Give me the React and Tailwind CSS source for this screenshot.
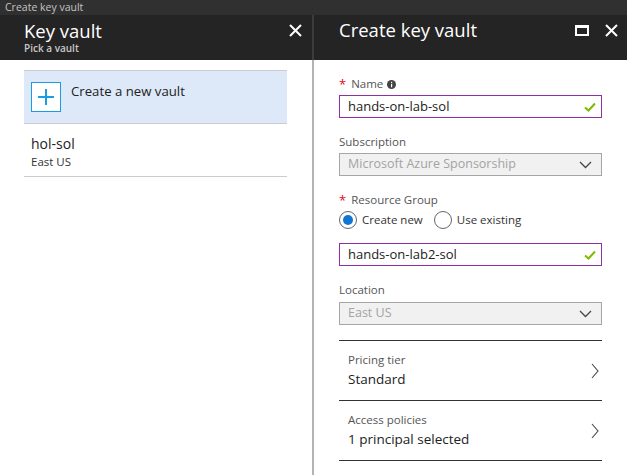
import React from "react";

const font = { fontFamily: '"Open Sans", "Noto Sans", sans-serif' };

function CloseIcon({ className }) {
  return (
    <svg className={className} width="13" height="13" viewBox="0 0 13 13">
      <path d="M1 1 L12 12 M12 1 L1 12" stroke="#fff" strokeWidth="2" fill="none" />
    </svg>
  );
}

function Check() {
  return (
    <svg width="12" height="10" viewBox="0 0 12 10">
      <path d="M1 5.5 L4.5 8.5 L11 1.5" stroke="#7fba00" strokeWidth="2" fill="none" />
    </svg>
  );
}

function Chevron() {
  return (
    <svg width="13" height="8" viewBox="0 0 13 8">
      <path d="M1 1 L6.5 6.5 L12 1" stroke="#444" strokeWidth="1.3" fill="none" />
    </svg>
  );
}

function ChevronRight() {
  return (
    <svg width="8" height="16" viewBox="0 0 8 16">
      <path d="M1 1 L7 8 L1 15" stroke="#444" strokeWidth="1.1" fill="none" />
    </svg>
  );
}

function Input({ value }) {
  return (
    <div className="h-[23px] border border-[#8f2fa8] flex items-center justify-between pl-[8px] pr-[5px] text-[13px] text-[#222]">
      <span>{value}</span>
      <Check />
    </div>
  );
}

function Select({ value }) {
  return (
    <div className="h-[23px] border border-[#a6a6a6] bg-[#f1f1f1] flex items-center justify-between pl-[8px] pr-[9px] text-[12.5px] text-[#a3a3a3]">
      <span>{value}</span>
      <Chevron />
    </div>
  );
}

function Label({ children, required }) {
  return (
    <div className="text-[11.5px] text-[#555] leading-[14px] flex items-center">
      {required && <span className="text-[#e00b1c] mr-[5px] text-[13px]">*</span>}
      {children}
    </div>
  );
}

function Radio({ checked, label }) {
  return (
    <div className="flex items-center gap-[5px]">
      <div className="w-[18px] h-[18px] rounded-full border border-[#666] flex items-center justify-center bg-white">
        {checked && <div className="w-[10px] h-[10px] rounded-full bg-[#0f76d6]" />}
      </div>
      <span className="text-[11.5px] text-[#333]">{label}</span>
    </div>
  );
}

function NavRow({ title, value }) {
  return (
    <div className="h-[60px] border-b border-[#333] flex items-center justify-between pl-[9px] pr-[3px]">
      <div className="flex flex-col">
        <span className="text-[11.5px] text-[#555] leading-[16px]">{title}</span>
        <span className="text-[13.5px] text-[#222] leading-[22px]">{value}</span>
      </div>
      <ChevronRight />
    </div>
  );
}

export default function App() {
  return (
    <div className="w-[627px] h-[475px] bg-white overflow-hidden flex flex-col" style={font}>
      <div className="h-[15px] bg-[#303030] text-[10.5px] leading-[15px] text-[#c4c4c4] pl-[5px]">
        Create key vault
      </div>
      <div className="flex-1 flex">
        {/* Left panel */}
        <div className="w-[312px] flex flex-col">
          <div className="h-[45px] bg-[#242424] flex justify-between pl-[24px] pr-[10px]">
            <div className="flex flex-col pt-[6px]">
              <span className="text-[18.5px] leading-[19px] text-white">Key vault</span>
              <span className="text-[10px] leading-[12px] font-semibold text-[#c9c9c9] mt-[2px]">Pick a vault</span>
            </div>
            <div className="pt-[9px]">
              <CloseIcon />
            </div>
          </div>
          <div className="pt-[10px] px-[24px] pr-[25px]">
            <div className="border-t border-b border-[#ccc] bg-[#dde9f8] h-[54px] flex items-start pt-[11px] pl-[7px]">
              <div className="w-[30px] h-[30px] border border-[#1a9de0] bg-white flex items-center justify-center">
                <svg width="16" height="16" viewBox="0 0 16 16">
                  <path d="M8 0 V16 M0 8 H16" stroke="#1a9de0" strokeWidth="2" />
                </svg>
              </div>
              <span className="ml-[10px] text-[13.2px] text-[#222] leading-[18px]">Create a new vault</span>
            </div>
            <div className="border-b border-[#ccc] h-[53px] pl-[7px] pt-[11px] flex flex-col">
              <span className="text-[14px] text-[#222] leading-[18px]">hol-sol</span>
              <span className="text-[11.5px] text-[#333] leading-[18px]">East US</span>
            </div>
          </div>
        </div>
        {/* Divider */}
        <div className="w-[2px] flex flex-col">
          <div className="h-[45px] bg-[#3c3c3c]" />
          <div className="flex-1 bg-[#b3b3b3]" />
        </div>
        {/* Right panel */}
        <div className="flex-1 flex flex-col">
          <div className="h-[45px] bg-[#242424] flex justify-between pl-[25px] pr-[9px]">
            <span className="text-[18.5px] leading-[22px] text-white pt-[4px]">Create key vault</span>
            <div className="flex items-start gap-[16px] pt-[9px]">
              <div className="w-[14px] h-[11px] border-2 border-t-[3px] border-white mt-[1px]" />
              <CloseIcon />
            </div>
          </div>
          <div className="pl-[25px] pr-[25px] pt-[17px] flex flex-col">
            <Label required>
              Name
              <svg className="ml-[4px]" width="9" height="9" viewBox="0 0 9 9">
                <circle cx="4.5" cy="4.5" r="4.5" fill="#444" />
                <rect x="4" y="3.8" width="1.2" height="3.5" fill="#fff" />
                <rect x="4" y="1.8" width="1.2" height="1.2" fill="#fff" />
              </svg>
            </Label>
            <div className="mt-[4px]">
              <Input value="hands-on-lab-sol" />
            </div>
            <div className="mt-[17px]">
              <Label>Subscription</Label>
            </div>
            <div className="mt-[4px]">
              <Select value="Microsoft Azure Sponsorship" />
            </div>
            <div className="mt-[17px]">
              <Label required>Resource Group</Label>
            </div>
            <div className="mt-[4px] flex gap-[11px]">
              <Radio checked label="Create new" />
              <Radio label="Use existing" />
            </div>
            <div className="mt-[14px]">
              <Input value="hands-on-lab2-sol" />
            </div>
            <div className="mt-[17px]">
              <Label>Location</Label>
            </div>
            <div className="mt-[5px]">
              <Select value="East US" />
            </div>
            <div className="mt-[15px] border-t border-[#333]">
              <NavRow title="Pricing tier" value="Standard" />
              <NavRow title="Access policies" value="1 principal selected" />
            </div>
          </div>
        </div>
      </div>
    </div>
  );
}
